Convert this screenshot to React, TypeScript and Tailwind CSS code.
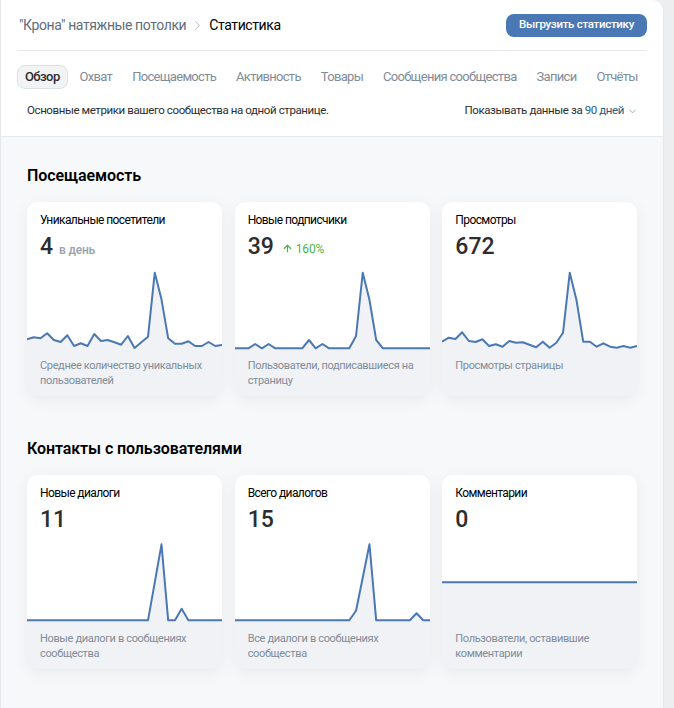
import { ChevronRight, ChevronDown, ArrowUp } from "lucide-react";

const tabs = ["Обзор", "Охват", "Посещаемость", "Активность", "Товары", "Сообщения сообщества", "Записи", "Отчёты"];

type Card = {
  title: string;
  value: string;
  extra?: "day" | "growth";
  desc: string;
  ys: number[];
};

const B1 = 86.3;
const B2 = 85.3;

const visits: Card[] = [
  {
    title: "Уникальные посетители",
    value: "4",
    extra: "day",
    desc: "Среднее количество уникальных пользователей",
    ys: [77.3, 75.3, 76.3, 71.3, 78, 80, 73.3, 84, 81.3, 84, 72, 79, 78, 80.3, 82.7, 74, 86, 80.3, 74.7, 10.7, 37.3, 76.3, 81.7, 81.7, 79.3, 84, 84, 80, 84, 83],
  },
  {
    title: "Новые подписчики",
    value: "39",
    extra: "growth",
    desc: "Пользователи, подписавшиеся на страницу",
    ys: [B1, B1, B1, 82, B1, 82, B1, B1, B1, B1, B1, 78, B1, 82, B1, B1, B1, B1, 74, 10.7, 38, 78, B1, B1, B1, B1, B1, B1, B1, B1],
  },
  {
    title: "Просмотры",
    value: "672",
    desc: "Просмотры страницы",
    ys: [79.7, 75.7, 77, 70.3, 79, 80, 77.3, 84, 82.3, 84.7, 79, 80.7, 80.3, 82.7, 85.3, 79.7, 85.7, 80.7, 70.7, 10.7, 38, 79.7, 79.7, 84.7, 81.3, 84.7, 85.7, 84, 85.7, 84],
  },
];

const contacts: Card[] = [
  {
    title: "Новые диалоги",
    value: "11",
    desc: "Новые диалоги в сообщениях сообщества",
    ys: [B2, B2, B2, B2, B2, B2, B2, B2, B2, B2, B2, B2, B2, B2, B2, B2, B2, B2, B2, 47.3, 9.3, B2, B2, 73.7, B2, B2, B2, B2, B2, B2],
  },
  {
    title: "Всего диалогов",
    value: "15",
    desc: "Все диалоги в сообщениях сообщества",
    ys: [B2, B2, B2, B2, B2, B2, B2, B2, B2, B2, B2, B2, B2, B2, B2, B2, B2, B2, 75.7, 42.5, 9.3, B2, B2, B2, B2, B2, B2, 78.3, B2, B2],
  },
  {
    title: "Комментарии",
    value: "0",
    desc: "Пользователи, оставившие комментарии",
    ys: Array(30).fill(47.3),
  },
];

function Chart({ ys }: { ys: number[] }) {
  const step = 195 / (ys.length - 1);
  const pts = ys.map((y, i) => `${(i * step).toFixed(2)},${y}`).join(" ");
  return (
    <svg width="195" height="90" viewBox="0 0 195 90" className="block">
      <polygon points={`0,0 ${pts} 195,0`} fill="#ffffff" />
      <polyline points={pts} fill="none" stroke="#4a78b4" strokeWidth="2" strokeLinejoin="round" />
    </svg>
  );
}

function StatCard({ card }: { card: Card }) {
  return (
    <div className="w-[195px] h-[194px] rounded-[10px] bg-[#f0f2f5] overflow-hidden shadow-[0_4px_16px_rgba(0,0,0,0.06)] flex flex-col">
      <div className="h-[60px] bg-white px-[13px] pt-[9px]">
        <div className="text-[12px] leading-[18px] tracking-[-0.6px] text-black">{card.title}</div>
        <div className="flex items-baseline gap-[6px] mt-[4px]">
          <span className="text-[23px] leading-[28px] font-medium text-[#2c2d2e]">{card.value}</span>
          {card.extra === "day" && (
            <span className="text-[12px] font-medium tracking-[-0.2px] text-[#99a2ad]">в день</span>
          )}
          {card.extra === "growth" && (
            <span className="flex items-center gap-[3px] text-[12px] tracking-[-0.2px] text-[#4bb34b] ml-[2px]">
              <ArrowUp size={11} strokeWidth={2.6} />
              160%
            </span>
          )}
        </div>
      </div>
      <Chart ys={card.ys} />
      <div className="px-[13px] pt-[6px] text-[11px] leading-[15px] tracking-[-0.35px] text-[#818c99]">
        {card.desc}
      </div>
    </div>
  );
}

function Section({ title, cards }: { title: string; cards: Card[] }) {
  return (
    <div>
      <h2 className="text-[16px] leading-[20px] font-semibold tracking-[-0.1px] text-black mb-[16px]">{title}</h2>
      <div className="grid grid-cols-3 gap-[13px]">
        {cards.map((c) => (
          <StatCard key={c.title} card={c} />
        ))}
      </div>
    </div>
  );
}

export default function App() {
  return (
    <div className="w-[674px] h-[708px] bg-[#edeef0] overflow-hidden font-['Roboto',sans-serif]">
      <div className="w-[664px] h-full bg-[#f7f8fa] border-x border-[#e7e8ec] rounded-tr-[12px] overflow-hidden">
        {/* HEADER */}
        <div className="bg-white border-b border-[#e7e8ec] px-4 pt-[13px] pb-[15px]">
          <div className="flex items-center justify-between h-6">
            <div className="flex items-center text-[14px] tracking-[-0.4px] pl-[2px]">
              <span className="text-[#626d7a]">"Крона" натяжные потолки</span>
              <ChevronRight size={15} className="text-[#aeb7c2] mx-[4px]" strokeWidth={1.5} />
              <span className="text-black">Статистика</span>
            </div>
            <button className="h-[23px] px-[13px] rounded-[8px] bg-[#4a78b4] text-white text-[11.5px] tracking-[-0.3px] font-medium">
              Выгрузить статистику
            </button>
          </div>
          <div className="mt-[13px] border-t border-[#e7e8ec]" />
          <div className="flex items-center mt-[14px] h-6 gap-[4px]">
            {tabs.map((t, i) => (
              <div
                key={t}
                className={
                  i === 0
                    ? "h-6 px-[7px] flex items-center rounded-[8px] bg-[#f2f3f5] border border-[#dce1e6] text-[13px] tracking-[-0.6px] font-medium text-[#2c2d2e]"
                    : "h-6 px-[8px] flex items-center text-[13px] tracking-[-0.7px] text-[#818c99] whitespace-nowrap"
                }
              >
                {t}
              </div>
            ))}
          </div>
          <div className="flex items-center justify-between mt-[12px] h-5 pl-[10px] pr-[9px] text-[11.5px] tracking-[-0.4px] text-[#2c2d2e]">
            <span>Основные метрики вашего сообщества на одной странице.</span>
            <span className="flex items-center">
              Показывать данные за&nbsp;<span className="text-[#2a5885]">90 дней</span>
              <ChevronDown size={11} className="text-[#99a2ad] ml-[3px]" />
            </span>
          </div>
        </div>

        {/* CONTENT */}
        <div className="px-[26px] pt-[29px] flex flex-col gap-[43px]">
          <Section title="Посещаемость" cards={visits} />
          <Section title="Контакты с пользователями" cards={contacts} />
        </div>
      </div>
    </div>
  );
}
